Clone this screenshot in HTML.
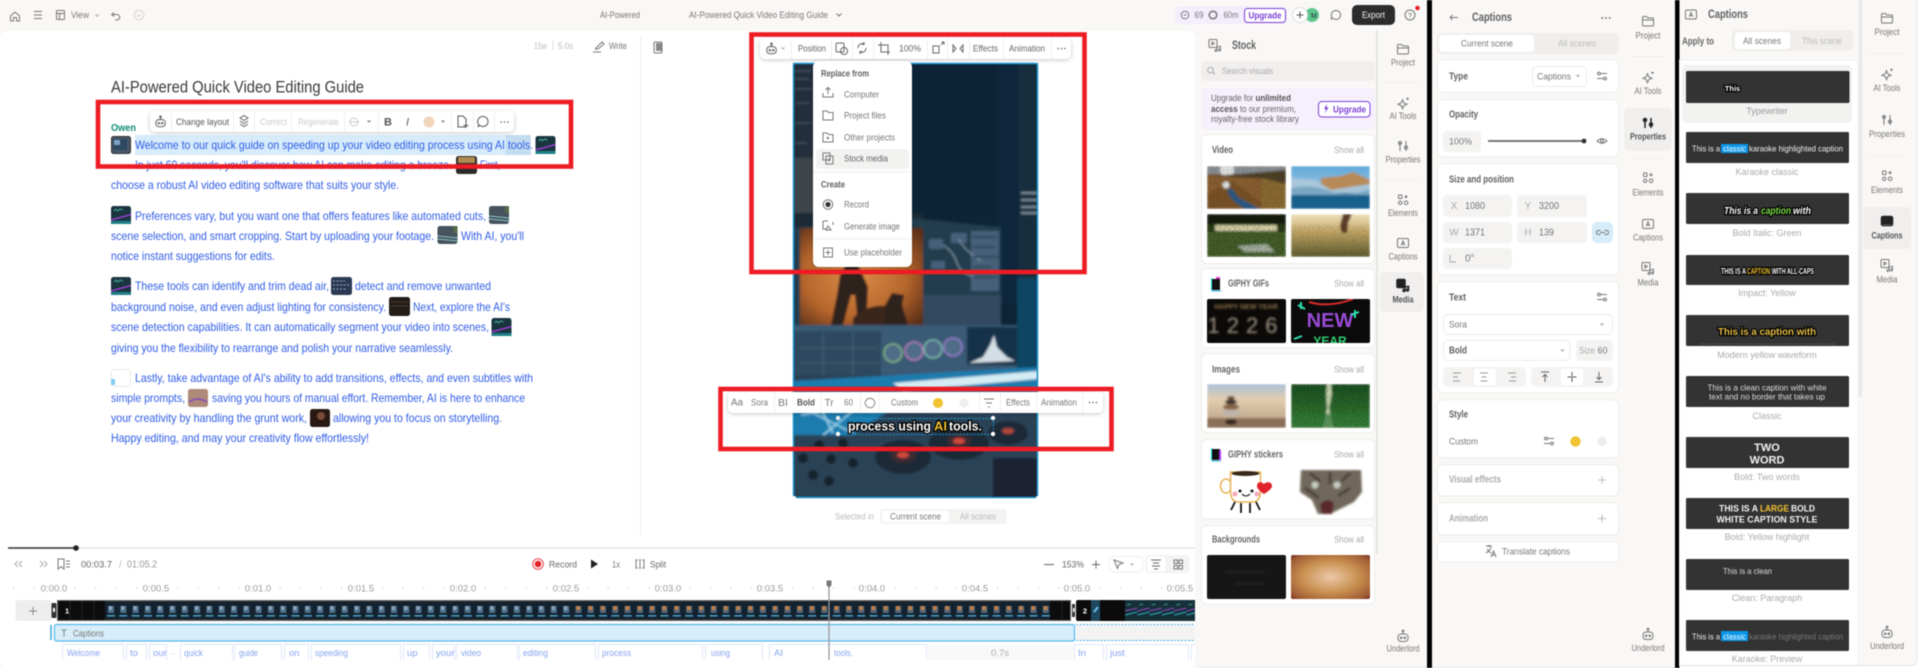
<!DOCTYPE html>
<html><head><meta charset="utf-8"><title>AI-Powered Quick Video Editing Guide</title>
<style>
html,body{margin:0;padding:0;width:1920px;height:668px;overflow:hidden;background:#fff}
svg#p{display:block;filter:blur(.5px)}
text{font-family:"Liberation Sans",sans-serif;font-size:10px;fill:#666;white-space:pre}
.m{text-anchor:middle}.e{text-anchor:end}
.b{font-weight:bold}
.s{font-size:9.5px;fill:#777}
.g{fill:#bbb}
.d{fill:#555}
.t{font-size:11.6px;fill:#2f5ce6}
.h{font-size:11.5px;font-weight:bold;fill:#606060}
.c{font-size:10px;font-weight:bold;fill:#606060}
.w{font-size:9.5px;fill:#86a3ee}
.r{font-size:9.5px;fill:#999;stroke:#fff;stroke-width:4;paint-order:stroke}
.l{font-size:9px;fill:#aaa;text-anchor:middle}
.ic{fill:none;stroke:#777;stroke-width:1}
.ia{fill:none;stroke:#222;stroke-width:1.5}
.wh{fill:#fff;stroke:#ececea;stroke-width:1}
.f{fill:#f4f3f2}
.dv{stroke:#eee;stroke-width:1}
.tb{fill:#fff;filter:url(#sh)}
.cap{fill:#fff;font-weight:bold;stroke:#000;stroke-width:2.6;paint-order:stroke}
</style></head><body>
<svg id="p" xmlns="http://www.w3.org/2000/svg" width="1920" height="668" viewBox="0 0 1920 668">
<defs>
<filter id="sh" x="-10%" y="-40%" width="120%" height="190%"><feDropShadow dx="0" dy="1" stdDeviation="2" flood-color="#000" flood-opacity=".22"/></filter>
<filter id="bl"><feGaussianBlur stdDeviation="1.2"/></filter>
<filter id="vb" x="-2%" y="-2%" width="104%" height="104%"><feGaussianBlur stdDeviation="1"/></filter>
<filter id="nz"><feTurbulence type="fractalNoise" baseFrequency=".55" numOctaves="2" seed="4"/><feColorMatrix values="0 0 0 0 0 0 0 0 0 0 0 0 0 0 0 0 0 0 2.4 -.9"/></filter>
<symbol id="fo" viewBox="0 0 16 16"><path d="M2.500 4.500a1 1 0 0 1 1-1h3L8 5h4.500a1 1 0 0 1 1 1v6a1 1 0 0 1-1 1h-9a1 1 0 0 1-1-1zM2.500 7h11"/></symbol>
<symbol id="sp" viewBox="0 0 16 16"><path d="M7.500 4.700 8.800 7.900 12 9.200 8.800 10.500 7.500 13.700 6.200 10.500 3 9.200 6.200 7.900z"/><circle cx="12.500" cy="3.800" r=".7"/></symbol>
<symbol id="sl" viewBox="0 0 16 16"><path d="M5 3v10M11 3v10"/><circle cx="5" cy="5" r="1.500"/><circle cx="11" cy="9.500" r="1.500"/></symbol>
<symbol id="el" viewBox="0 0 16 16"><rect x="3.500" y="3" width="3.500" height="3.500" rx=".6"/><path d="M11 3v3.500M9.300 4.700h3.500"/><circle cx="5.200" cy="10.800" r="1.700"/><rect x="9.300" y="9" width="3.600" height="3.600" rx="1.800"/></symbol>
<symbol id="ca" viewBox="0 0 16 16"><rect x="2.500" y="3.500" width="11" height="9" rx="1.500"/><path d="M6.300 10.300 8 6l1.700 4.300M6.900 9h2.200"/></symbol>
<symbol id="me" viewBox="0 0 16 16"><rect x="2" y="2.500" width="8" height="8" rx="1"/><path d="M5 5l2.300 1.500L5 8zM10 10l3.500-.6v3.600M10 10v3.500"/><circle cx="9" cy="13.500" r="1"/><circle cx="12.500" cy="13" r="1"/></symbol>
<symbol id="ro" viewBox="0 0 16 16"><rect x="3" y="6" width="10" height="7.500" rx="3"/><path d="M8 3.800V6"/><circle cx="8" cy="3" r=".9"/><circle cx="6.200" cy="9.800" r=".8"/><circle cx="9.800" cy="9.800" r=".8"/></symbol>
<symbol id="do" viewBox="0 0 16 16"><circle cx="3" cy="8" r="1.100" fill="#555" stroke="none"/><circle cx="8" cy="8" r="1.100" fill="#555" stroke="none"/><circle cx="13" cy="8" r="1.100" fill="#555" stroke="none"/></symbol>
<symbol id="sh2" viewBox="0 0 16 16"><path d="M6.500 5.500h6.500M3 5.500h.5M3 10.500h6.500M12.500 10.500h.5"/><circle cx="5" cy="5.500" r="1.400"/><circle cx="11" cy="10.500" r="1.400"/></symbol>
<symbol id="th1" viewBox="0 0 20 18"><rect width="20" height="18" rx="2.500" fill="#1a3540"/><path d="M3 5l2-2 2 2 2-2 3 1" stroke="#4a9" stroke-width="1" fill="none"/><path d="M0 14 20 8.500" stroke="#9a3dd0" stroke-width="1.500"/><path d="M0 15H20V18H0z" fill="#1e8088"/></symbol>
<symbol id="th2" viewBox="0 0 20 18"><rect width="20" height="18" rx="2.500" fill="#46525c"/><path d="M0 10 20 12M0 13 20 15" stroke="#8cc8cc" stroke-width="1"/><path d="M16 0h4v7h-4z" fill="#556b4a"/></symbol>
<symbol id="th3" viewBox="0 0 20 18"><rect width="20" height="18" rx="2.500" fill="#4a5868"/><rect x="2" y="3" width="14" height="11" fill="#2c4a62"/><rect x="3" y="4" width="6" height="5" fill="#7fa2c4"/><rect x=".5" y=".5" width="19" height="17" rx="2.500" fill="none" stroke="#333"/></symbol>
<pattern id="f1" x="105" y="600" width="12.300" height="21" patternUnits="userSpaceOnUse"><rect width="12.300" height="21" fill="#13222f"/><rect x="3" y="6" width="6" height="7" fill="#4f6f8a"/><rect x="4" y="6" width="3" height="4" fill="#8ea6ba"/><rect x="2" y="15" width="8" height="1.600" fill="#4a9cc0"/><rect width="12.300" height="1.600" fill="#333"/><rect y="19.400" width="12.300" height="1.600" fill="#333"/></pattern>
<pattern id="f2" x="105" y="600" width="12.300" height="21" patternUnits="userSpaceOnUse"><rect width="12.300" height="21" fill="#13222f"/><rect x="3" y="6" width="6" height="7" fill="#566878"/><rect x="4" y="6" width="3.500" height="4" fill="#c47e46"/><rect x="2" y="15" width="8" height="1.600" fill="#4a9cc0"/><rect width="12.300" height="1.600" fill="#333"/><rect y="19.400" width="12.300" height="1.600" fill="#333"/></pattern>
<pattern id="f3" x="1125" y="600" width="12.300" height="21" patternUnits="userSpaceOnUse"><rect width="12.300" height="21" fill="#16303a"/><path d="M0 11 12.300 8" stroke="#8a45b8" stroke-width="1.100"/><path d="M0 15 12.300 12" stroke="#2a9aa4" stroke-width="1.300"/><path d="M2 5l4-1" stroke="#397" stroke-width="1"/></pattern>
<radialGradient id="or" cx=".45" cy=".5" r=".7"><stop offset="0" stop-color="#dc8c48"/><stop offset=".6" stop-color="#b5662c"/><stop offset="1" stop-color="#5a2e16"/></radialGradient>
<radialGradient id="bgo" r=".72"><stop offset="0" stop-color="#ecc8aa"/><stop offset=".5" stop-color="#c8904f"/><stop offset=".85" stop-color="#a05a34"/><stop offset="1" stop-color="#6a2820"/></radialGradient>
<linearGradient id="sky" x1="0" y1="0" x2="0" y2="1"><stop offset="0" stop-color="#5fa8d8"/><stop offset="1" stop-color="#c8dce8"/></linearGradient>
<linearGradient id="fld" x1="0" y1="0" x2="0" y2="1"><stop offset="0" stop-color="#efe2c0"/><stop offset=".4" stop-color="#c4a868"/><stop offset="1" stop-color="#5e5a2c"/></linearGradient>
<linearGradient id="snd" x1="0" y1="0" x2="0" y2="1"><stop offset="0" stop-color="#a9c2d8"/><stop offset=".35" stop-color="#e3cdb0"/><stop offset="1" stop-color="#b59a80"/></linearGradient>
<linearGradient id="fr" x1="0" y1="0" x2="0" y2="1"><stop offset="0" stop-color="#1a4f22"/><stop offset="1" stop-color="#3a8034"/></linearGradient>
</defs>

<rect width="1920" height="668" fill="#fff"/>
<rect width="1427" height="668" fill="#faf8f6"/>
<rect x="0" y="31" width="1195" height="637" rx="7" fill="#fff"/>
<path d="M640.500 36V535" stroke="#eee"/>
<path d="M1377 30v524" stroke="#e6e6e6" stroke-width="2"/>

<!-- top bar -->
<path d="M10.500 16l4.500-4 4.500 4v5h-3v-3.500h-3V21h-3z" class="ic"/>
<path d="M34 11.500h8M34 15h8M34 18.500h8" class="ic"/>
<rect x="56.500" y="10.500" width="8" height="9" rx="1" class="ic"/><path d="M56.500 13.500h8M59.500 13.500v6" class="ic"/>
<text x="71" y="18" class="s" textLength="18">View</text>
<path d="M95.500 14.500l1.800 1.800 1.800-1.800" class="ic" style="stroke:#aaa"/>
<path d="M114 12.500l-2.300 2 2.300 2M112 14.500h5a2.700 2.700 0 0 1 0 5.400h-2" class="ic"/>
<circle cx="139" cy="15" r="4.800" fill="none" stroke="#d4d4d4"/><path d="M137 15l1.500 1.500 2.500-3" fill="none" stroke="#d4d4d4"/>
<text x="600" y="18" class="s" textLength="40">AI-Powered</text>
<text x="689" y="18" class="s" textLength="139">AI-Powered Quick Video Editing Guide</text>
<path d="M836.500 13.500l2.500 2.500 2.500-2.500" class="ic"/>
<rect x="1175" y="6" width="112" height="18" rx="6" fill="#f3eefb"/>
<circle cx="1185" cy="15" r="3.800" class="ic"/><path d="M1183.500 15h3" class="ic"/>
<text x="1199" y="18" class="s m" textLength="9">69</text>
<circle cx="1213" cy="15" r="3.800" fill="none" stroke="#777" stroke-width="1.500"/>
<text x="1231" y="18" class="s m" textLength="15">60m</text>
<rect x="1244.500" y="8.500" width="41" height="14" rx="3" fill="#fff" stroke="#7c3fd6"/>
<text x="1265" y="18.500" class="m b" style="font-size:9.500px;fill:#7c3fd6" textLength="33">Upgrade</text>
<circle cx="1312" cy="15" r="7" fill="#5ec58c"/><text x="1311" y="18" style="font-size:7px;fill:#234">M</text>
<circle cx="1300" cy="15" r="7.500" fill="#fff" stroke="#ddd"/><path d="M1296.500 15h7M1300 11.500v7" stroke="#555" fill="none"/>
<path d="M1336 10.500a4.500 4.500 0 1 1-3 7.800l-1.700.7.500-2a4.500 4.500 0 0 1 4.200-6.500z" class="ic"/>
<rect x="1352" y="5" width="43" height="20" rx="5" fill="#2c2c2c"/>
<text x="1373.500" y="18" class="m" style="font-size:9.500px;fill:#f4f4f4" textLength="23">Export</text>
<circle cx="1410" cy="15" r="5" class="ic"/><text x="1410" y="18" class="m" style="font-size:7.500px">?</text>
<circle cx="1417.500" cy="8" r="2.300" fill="#e8202a"/>

<!-- script panel -->
<text x="534" y="49" class="g" style="font-size:9px" textLength="13">15w</text>
<path d="M553 41v9" stroke="#ddd"/>
<text x="558" y="49" class="g" style="font-size:9px" textLength="15">5.0s</text>
<path d="M593 52h8M596 48l6-6 2 2-6 5h-2.500z" class="ic"/>
<text x="609" y="49" class="s" textLength="18">Write</text>
<rect x="654" y="42" width="8" height="11" rx="1.200" class="ic"/><rect x="656" y="43" width="5.500" height="8" fill="#888"/>

<text x="111" y="92.500" style="font-size:16.500px;fill:#3a3a3a" textLength="253">AI-Powered Quick Video Editing Guide</text>
<text x="111" y="131" style="font-size:10.500px;font-weight:bold;fill:#0f8a72" textLength="25">Owen</text>

<rect x="135" y="135" width="396" height="20" fill="#d6ecfa"/>
<rect x="506" y="135" width="24.500" height="20" fill="#c4dcf0"/>
<use href="#th3" x="111" y="136" width="20" height="18"/>
<text x="135" y="149" class="t" textLength="398">Welcome to our quick guide on speeding up your video editing process using AI tools.</text>
<use href="#th1" x="535" y="136" width="21" height="18"/>
<text x="135" y="169" class="t" textLength="317">In just 60 seconds, you'll discover how AI can make editing a breeze.</text>
<rect x="456" y="156" width="21" height="18" rx="2.500" fill="#2c2a28"/><rect x="458" y="157" width="17" height="6" fill="#b08a52"/>
<text x="480" y="169" class="t" textLength="20">First,</text>
<text x="111" y="189" class="t" textLength="288">choose a robust AI video editing software that suits your style.</text>

<use href="#th1" x="111" y="206" width="20" height="18"/>
<text x="135" y="220" class="t" textLength="351">Preferences vary, but you want one that offers features like automated cuts,</text>
<use href="#th2" x="489" y="206" width="20" height="18"/>
<text x="111" y="240" class="t" textLength="323">scene selection, and smart cropping. Start by uploading your footage.</text>
<use href="#th2" x="437" y="226" width="21" height="18"/>
<text x="461" y="240" class="t" textLength="63">With AI, you'll</text>
<text x="111" y="260" class="t" textLength="164">notice instant suggestions for edits.</text>

<use href="#th1" x="111" y="277" width="20" height="18"/>
<text x="135" y="290" class="t" textLength="194">These tools can identify and trim dead air,</text>
<rect x="331" y="277" width="21" height="18" rx="2.500" fill="#2b3a52"/><path d="M333 281h12M333 285h16M333 289h14" stroke="#8fa8c8" stroke-dasharray="2 1.500" fill="none"/>
<text x="355" y="290" class="t" textLength="136">detect and remove unwanted</text>
<text x="111" y="311" class="t" textLength="275">background noise, and even adjust lighting for consistency.</text>
<rect x="389" y="297" width="21" height="19" rx="2.500" fill="#231d1a"/><path d="M391 302h17M391 306h17" stroke="#4a3a30" fill="none"/>
<text x="413" y="311" class="t" textLength="97">Next, explore the AI's</text>
<text x="111" y="331" class="t" textLength="378">scene detection capabilities. It can automatically segment your video into scenes,</text>
<use href="#th1" x="491" y="318" width="21" height="18"/>
<text x="111" y="352" class="t" textLength="342">giving you the flexibility to rearrange and polish your narrative seamlessly.</text>

<rect x="111.500" y="369.500" width="19" height="17" rx="2.500" fill="#fff" stroke="#e8e8e8"/><rect x="111" y="379" width="4" height="6" fill="#7fd0ee"/>
<text x="135" y="382" class="t" textLength="398">Lastly, take advantage of AI's ability to add transitions, effects, and even subtitles with</text>
<text x="111" y="402" class="t" textLength="74">simple prompts,</text>
<rect x="188" y="389" width="20" height="18" rx="2.500" fill="#b08a78"/><path d="M189 402q8-6 18 0" stroke="#8a5ab0" stroke-width="2" fill="none"/>
<text x="212" y="402" class="t" textLength="313">saving you hours of manual effort. Remember, AI is here to enhance</text>
<text x="111" y="422" class="t" textLength="196">your creativity by handling the grunt work,</text>
<rect x="310" y="409" width="20" height="18" rx="2.500" fill="#2a1812"/><circle cx="321" cy="416" r="4" fill="#7a4a38"/>
<text x="333" y="422" class="t" textLength="169">allowing you to focus on storytelling.</text>
<text x="111" y="442" class="t" textLength="258">Happy editing, and may your creativity flow effortlessly!</text>

<!-- script toolbar -->
<rect x="150" y="111" width="364" height="21" rx="5" class="tb"/>
<use href="#ro" x="153" y="114" width="15" height="15" class="ic" style="stroke:#555"/>
<path d="M171.500 111v21M233.500 111v21M254.500 111v21M291.500 111v21M344.500 111v21M378.500 111v21M451.500 111v21M473.500 111v21M494.500 111v21" class="dv"/>
<text x="176" y="125" class="d" style="font-size:9.500px" textLength="53">Change layout</text>
<path d="M240 118l4-2.500 4 2.500-4 2.500zM240 121l4 2.500 4-2.500M240 124l4 2.500 4-2.500" class="ic" style="stroke:#666"/>
<text x="260" y="125" class="g" style="font-size:9.500px;fill:#ccc" textLength="27">Correct</text>
<text x="298" y="125" class="g" style="font-size:9.500px;fill:#ccc" textLength="41">Regenerate</text>
<circle cx="354" cy="122" r="4" fill="none" stroke="#ccc"/><path d="M349 122h10" stroke="#ccc"/>
<path d="M367.500 120.500l1.500 1.500 1.500-1.500" class="ic"/>
<text x="388" y="125.500" class="m b" style="font-size:11px;fill:#555">B</text>
<text x="407.500" y="125.500" class="m" style="font-size:11px;font-style:italic;fill:#555">I</text>
<circle cx="429" cy="122" r="5.500" fill="#f1d6bd"/>
<path d="M441.500 120.500l1.500 1.500 1.500-1.500" class="ic"/>
<path d="M458 116h5l3 3v8h-8zM466 123v5M463.500 125.500h5" class="ic" style="stroke:#555"/>
<path d="M483 116.500a5 5 0 1 1-3 9l-1.800 1 .5-2a5 5 0 0 1 4.300-8z" class="ic" style="stroke:#555"/>
<use href="#do" x="499" y="116.500" width="11" height="11"/>

<!-- canvas video -->
<svg x="793" y="63" width="245" height="435" viewBox="0 0 245 435">
<rect width="245" height="435" fill="#0d2436"/>
<g filter="url(#vb)">
<rect width="22" height="150" fill="#222f3a"/>
<path d="M2 8h16M2 16h14M2 26h17M3 40h14M2 60h16M2 80h12M2 96h15M2 115h14" stroke="#4a5a66" fill="none"/>
<rect x="205" width="40" height="240" fill="#10263a"/>
<rect x="225" width="20" height="215" fill="#182e3e"/>
<path d="M228 130h17M228 137h17M228 144h17M228 150h17" stroke="#80939f" stroke-width="2" fill="none"/>
<rect y="95" width="22" height="55" fill="#3c454b"/>
<rect y="150" width="130" height="15" fill="#1c2a36"/>
<path d="M119 155 208 164V310H0V165z" fill="#243c4e"/>
<rect x="7" y="165" width="123" height="97" fill="url(#or)"/>
<path d="M38 262l6-30 3-20 8-14 6-2 6 10 8 18-2 38h-8l-3-30-4 0-8 30zM86 262l5-18 8-14 12 2-2 10 6 20z" fill="#2e201a"/>
<path d="M60 255q14-14 34-12l-4 19H60z" fill="#3a261c"/>
<path d="M136 176h14v10h-14zM158 170h16v10h-16zM138 198h14v8h-14zM178 168h28v60h-28z" fill="#46607a"/>
<path d="M150 182q10 6 14 18t20 14M166 176q4 10 22 22" stroke="#8ca4b4" fill="none"/>
<path d="M180 174h24M180 184h22M180 194h26M180 204h18M180 214h24" stroke="#2b4456" stroke-width="2"/>
<rect x="130" y="232" width="78" height="30" fill="#324a5e"/>
<rect y="262" width="245" height="55" fill="#3a5a74"/>
<rect y="268" width="88" height="45" fill="#2f4a5e"/>
<path d="M5 300h80M30 270v45M60 270v45M5 285h80" stroke="#54758c" fill="none" stroke-width=".6"/>
<circle cx="100" cy="290" r="9" fill="#4f6c88" stroke="#8ac080" stroke-width="1.300"/>
<circle cx="121" cy="288" r="9" fill="#4f6c88" stroke="#c080c8" stroke-width="1.300"/>
<circle cx="140" cy="286" r="9" fill="#4f6c88" stroke="#80c8b0" stroke-width="1.300"/>
<circle cx="160" cy="284" r="9" fill="#4f6c88" stroke="#a080d8" stroke-width="1.300"/>
<rect x="174" y="264" width="50" height="38" fill="#14304a"/>
<path d="M176 300l14-6 7-12 4-10 3 12 10 10 8 4z" fill="#d4dee6"/>
<rect x="224" y="215" width="21" height="95" fill="#0f4464"/>
<rect y="312" width="245" height="123" fill="#2c4256"/>
<path d="M0 318 245 304V330L0 352z" fill="#1a7cae"/>
<path d="M100 320 245 308V316L110 328z" fill="#d4ecf4"/>
<path d="M0 345 75 330 100 345 60 372 0 372z" fill="#1e7cae"/>
<path d="M0 340 60 370M20 330 40 370M70 340 30 372M8 352 50 345" stroke="#9cd8f0" stroke-width="1.500" fill="none"/>
<ellipse cx="110" cy="394" rx="28" ry="17" fill="#1c2a38"/><ellipse cx="110" cy="392" rx="13" ry="8" fill="#3c2a30"/><ellipse cx="110" cy="392" rx="6" ry="3" fill="#d0483a"/>
<ellipse cx="166" cy="380" rx="30" ry="17" fill="#1c2a38"/><ellipse cx="166" cy="378" rx="12" ry="7" fill="#3c2a30"/><ellipse cx="166" cy="378" rx="6" ry="3" fill="#d0483a"/>
<ellipse cx="215" cy="370" rx="20" ry="12" fill="#1c2a38"/><ellipse cx="215" cy="368" rx="6" ry="3" fill="#b04a3a"/>
<g fill="#14202c"><circle cx="10" cy="395" r="5"/><circle cx="26" cy="382" r="5"/><circle cx="38" cy="396" r="5"/><circle cx="20" cy="412" r="5"/><circle cx="50" cy="380" r="5"/><circle cx="60" cy="400" r="5"/><circle cx="36" cy="418" r="5"/></g>
<rect x="200" y="395" width="45" height="40" fill="#1a2430"/>
</g>
</svg>
<rect x="793.500" y="63.500" width="244" height="434" rx="2" fill="none" stroke="#1b96d2" stroke-width="1.500"/>
<circle cx="794" cy="498" r="2" fill="#fff"/><circle cx="1038" cy="498" r="2" fill="#fff"/>

<!-- canvas toolbar -->
<rect x="760" y="38" width="311" height="21" rx="5" class="tb"/>
<use href="#ro" x="764" y="41" width="15" height="15" class="ic" style="stroke:#555"/>
<path d="M781.500 47.500l1.500 1.500 1.500-1.500" class="ic" style="stroke:#aaa"/>
<path d="M791.500 38v21M831.500 38v21M852.500 38v21M873.500 38v21M927.500 38v21M947.500 38v21M969.500 38v21M1003.500 38v21M1051.500 38v21" class="dv"/>
<text x="798" y="51.500" class="s" style="fill:#666" textLength="28">Position</text>
<rect x="836" y="43" width="8" height="9" rx="1.500" class="ic" style="stroke:#666"/><circle cx="844" cy="51" r="3.500" fill="#fff" class="ic" style="stroke:#666"/>
<path d="M858 48a4.500 4.500 0 0 1 6-4.200M866 48a4.500 4.500 0 0 1-6 4.200M864 42v2.500h-2M860 54v-2.500h2" class="ic" style="stroke:#666"/>
<path d="M881 42v10h9M878 45h10v10" class="ic" style="stroke:#666"/>
<text x="899" y="51.500" class="s" style="fill:#666" textLength="22">100%</text>
<rect x="933" y="46" width="6" height="7" class="ic" style="stroke:#666"/><path d="M941 45l3-3M941.500 42h2.500v2.500" class="ic" style="stroke:#666"/>
<path d="M953 45v7l3-3.500zM963 45v7l-3-3.500z" class="ic" style="stroke:#666"/>
<text x="973" y="51.500" class="s" style="fill:#666" textLength="25">Effects</text>
<text x="1009" y="51.500" class="s" style="fill:#666" textLength="36">Animation</text>
<use href="#do" x="1056" y="43" width="11" height="11"/>

<!-- replace menu -->
<rect x="813" y="61" width="99" height="206" rx="6" class="tb"/>
<rect x="816" y="149" width="93" height="20" rx="3" fill="#f2f2f1"/>
<text x="821" y="76.500" class="c" style="font-size:9.500px" textLength="48">Replace from</text>
<path d="M823 93v4h10v-4M828 94v-6M825.500 90l2.500-2.500 2.500 2.500" class="ic"/>
<text x="844" y="97.500" class="s" textLength="35">Computer</text>
<path d="M823 111h4l1.500 1.500h4.500v7.500H823z" class="ic"/>
<text x="844" y="118.500" class="s" textLength="42">Project files</text>
<path d="M823 133h4l1.500 1.500h4.500v7.500H823z" class="ic"/><path d="M827 136.500l2.500 1.500-2.500 1.500z" fill="#666"/>
<text x="844" y="140.500" class="s" textLength="51">Other projects</text>
<rect x="823" y="153" width="7" height="7" class="ic"/><rect x="826" y="156" width="7" height="8" fill="#f2f2f1" class="ic"/><path d="M828.500 158.500l2 1.500-2 1.500z" fill="#666"/>
<text x="844" y="161.500" class="s" style="fill:#666" textLength="44">Stock media</text>
<path d="M813 172h99M813 239h99" class="dv"/>
<text x="821" y="187.500" class="c" style="font-size:9.500px" textLength="24">Create</text>
<circle cx="828" cy="204.500" r="4.800" class="ic"/><circle cx="828" cy="204.500" r="2.600" fill="#333"/>
<text x="844" y="207.500" class="s" textLength="25">Record</text>
<path d="M823 221h5M823 221v8h4M833 225v-3M826 230l2-4 3 4z" class="ic"/>
<text x="844" y="229.500" class="s" textLength="56">Generate image</text>
<rect x="823.500" y="248" width="9" height="9" class="ic"/><path d="M828 250v5M825.500 252.500h5" class="ic"/>
<text x="844" y="255.500" class="s" textLength="58">Use placeholder</text>

<!-- caption overlay -->
<rect x="838.500" y="418.500" width="155" height="16" fill="none" stroke="#1b96d2" stroke-dasharray="2 1.500"/>
<text x="848" y="430.500" class="cap" style="font-size:12.500px" textLength="83">process using</text>
<text x="934" y="430.500" class="cap" style="font-size:12.500px;fill:#f1c232" textLength="13">AI</text>
<text x="949" y="430.500" class="cap" style="font-size:12.500px" textLength="33">tools.</text>
<circle cx="838" cy="434" r="2.200" fill="#fff"/><circle cx="993" cy="434" r="2.200" fill="#fff"/><circle cx="993" cy="418" r="2.200" fill="#fff"/><circle cx="838" cy="418" r="2.200" fill="#eee"/>

<rect x="728" y="392" width="375" height="21" rx="5" class="tb"/>
<path d="M774.500 392v21M821.500 392v21M860.500 392v21M879.500 392v21M979.500 392v21M1000.500 392v21M1036.500 392v21M1082.500 392v21" class="dv"/>
<text x="737" y="405.500" class="m s" style="font-size:10px">Aa</text>
<text x="751" y="405.500" class="s" textLength="17">Sora</text>
<text x="783" y="406" class="m s" style="font-size:10px" textLength="10">BI</text>
<text x="797" y="405.500" class="b d" style="font-size:9.500px" textLength="18">Bold</text>
<text x="829" y="406" class="m s" style="font-size:10px">Tr</text>
<text x="844" y="405.500" class="s" textLength="9">60</text>
<circle cx="870" cy="403" r="4.800" fill="#fff" stroke="#888"/>
<text x="891" y="405.500" class="s" textLength="27">Custom</text>
<circle cx="938" cy="403" r="5" fill="#f1c232"/>
<circle cx="964" cy="403" r="4.500" fill="#eee"/>
<path d="M984 399h10M986 403h6M988 407h2" class="ic"/>
<text x="1006" y="405.500" class="s" textLength="24">Effects</text>
<text x="1041" y="405.500" class="s" textLength="36">Animation</text>
<use href="#do" x="1087.500" y="397" width="11" height="11"/>

<text x="835" y="519.500" class="g" style="font-size:9.500px" textLength="39">Selected in</text>
<rect x="880" y="509" width="127" height="15" rx="3" fill="#f3f3f2"/>
<rect x="882" y="511" width="67" height="11" rx="2.500" fill="#fff"/>
<text x="890" y="519.500" class="s" textLength="51">Current scene</text>
<text x="960" y="519.500" class="g" style="font-size:9.500px" textLength="36">All scenes</text>

<!-- red boxes -->
<g fill="none" stroke="#ed1c24" stroke-width="4.600">
<rect x="98" y="102" width="473" height="64.500"/>
<rect x="751.500" y="34.500" width="333" height="237.500"/>
<rect x="720.500" y="389" width="391" height="60"/>
</g>

<!-- timeline -->
<path d="M8 548H1195" stroke="#e6e6e6" stroke-width="1.500"/>
<path d="M8 548H76" stroke="#333" stroke-width="1.500"/><circle cx="76" cy="548" r="2.800" fill="#222"/>
<path d="M22 561l-3 3 3 3M18 561l-3 3 3 3M40 561l3 3-3 3M44 561l3 3-3 3" class="ic" style="stroke:#aaa"/>
<path d="M58 559h6v10l-3-2.500-3 2.500zM66 561h4M66 564h4M66 567h4" class="ic"/>
<text x="81" y="567.500" class="s" style="fill:#666" textLength="31">00:03.7</text>
<text x="119" y="567.500" class="g">/</text>
<text x="127" y="567.500" class="g" style="fill:#999" textLength="30">01:05.2</text>
<circle cx="538" cy="564" r="5.300" fill="#fff" stroke="#e8474c"/><circle cx="538" cy="564" r="3.300" fill="#e8202a"/>
<text x="549" y="567.500" class="s" style="fill:#666" textLength="28">Record</text>
<path d="M591 559.500v9l7-4.500z" fill="#222"/>
<text x="612" y="567.500" class="s" textLength="8">1x</text>
<path d="M640 559v10M638 560h-2v8h2M642 560h2v8h-2" class="ic"/>
<text x="650" y="567.500" class="s" style="fill:#666" textLength="16">Split</text>
<path d="M1044 564.500h10" stroke="#666"/>
<text x="1062" y="567.500" class="s" style="fill:#666" textLength="22">153%</text>
<path d="M1092 564.500h8M1096 560.500v8" stroke="#666"/>
<rect x="1109.500" y="556.500" width="33" height="15.500" rx="4" fill="#fff" stroke="#eee"/>
<path d="M1114 560l9 3-4 1.500-1.500 4z" class="ic"/><path d="M1130.500 563.500l1.500 1.500 1.500-1.500" class="ic" style="stroke:#aaa"/>
<rect x="1145" y="555" width="44" height="18" rx="3" fill="#f3f3f2"/><rect x="1147.500" y="556.500" width="18" height="15" rx="3" fill="#fff"/>
<path d="M1151 560h10M1153 563h6M1152 566h8M1154 569h4" class="ic" style="stroke:#666"/>
<rect x="1174" y="560" width="3.500" height="3.500" class="ic"/><rect x="1179" y="560" width="3.500" height="3.500" class="ic"/><rect x="1174" y="565.500" width="3.500" height="3.500" class="ic"/><rect x="1179" y="565.500" width="3.500" height="3.500" class="ic"/>

<path d="M13 588H1195" stroke="#c8c8c8" stroke-width="1.200" stroke-dasharray="1.200 19.300"/>
<text x="54" y="591.500" class="r m">0:00.0</text><text x="156" y="591.500" class="r m">0:00.5</text><text x="258" y="591.500" class="r m">0:01.0</text><text x="361" y="591.500" class="r m">0:01.5</text><text x="463" y="591.500" class="r m">0:02.0</text><text x="566" y="591.500" class="r m">0:02.5</text><text x="668" y="591.500" class="r m">0:03.0</text><text x="770" y="591.500" class="r m">0:03.5</text><text x="872" y="591.500" class="r m">0:04.0</text><text x="975" y="591.500" class="r m">0:04.5</text><text x="1077" y="591.500" class="r m">0:05.0</text><text x="1180" y="591.500" class="r m">0:05.5</text>

<rect x="15.500" y="600" width="36" height="21" rx="3" fill="#eee"/><path d="M29 611h8M33 607v8" stroke="#888" fill="none"/>
<rect x="51.500" y="603" width="5" height="15" rx="1" fill="#333"/><rect x="53" y="608" width="2" height="4" fill="#fff"/>
<rect x="57" y="600" width="1014" height="21" fill="#0c0c0c"/>
<rect x="105" y="601" width="465" height="19" fill="url(#f1)"/>
<rect x="570" y="601" width="480" height="19" fill="url(#f2)"/>
<rect x="57.500" y="600.500" width="1013" height="20" fill="none" stroke="#666"/>
<path d="M70 601v19M82 601v19M94 601v19M1062 601v19" stroke="#222"/>
<text x="65" y="613.500" style="font-size:7.500px;fill:#fff;font-weight:bold">1</text>
<rect x="1072" y="604" width="3" height="13" fill="#333"/><rect x="1073" y="608" width="1.500" height="4" fill="#fff"/>
<rect x="1076" y="600" width="119" height="21" rx="2" fill="#0b0b0b"/>
<text x="1085" y="613.500" style="font-size:7.500px;fill:#fff;font-weight:bold" class="m">2</text>
<rect x="1091" y="600" width="9" height="21" fill="#1e4860"/><path d="M1094 612l4-5" stroke="#6fc0e8" stroke-width="2"/>
<rect x="1125" y="600" width="70" height="21" fill="url(#f3)"/>

<path d="M51 625v15" stroke="#3aa6de" stroke-width="1.500"/>
<rect x="54.500" y="624.500" width="1020" height="16.500" rx="2" fill="#d7edfa" stroke="#55b8ea" stroke-width="1.200"/>
<rect x="1076" y="625" width="119" height="16" fill="#f3f3f3"/>
<path d="M1076 624.500h119M1076 640.500h119" stroke="#49aee8" stroke-dasharray="2 1.500"/>
<text x="64" y="636.500" class="s m" style="font-size:10px">T</text>
<text x="73" y="636.500" class="s" textLength="31">Captions</text>

<g fill="#fff" stroke="#dfe8fb">
<path d="M62.500 660v-15.500h61V660M126.500 660v-15.500h20V660M149.500 660v-15.500h17V660M180.500 660v-15.500h52V660M234.500 660v-15.500h47V660M284.500 660v-15.500h24V660M311.500 660v-15.500h89V660M403.500 660v-15.500h26V660M432.500 660v-15.500h22V660M456.500 660v-15.500h61V660M519.500 660v-15.500h76V660M598.500 660v-15.500h104V660M705.500 660v-15.500h57V660M769.500 660v-15.500h157V660M1074.500 660v-15.500h29V660M1106.500 660v-15.500h82V660M1191.500 660v-15.500h4"/>
</g>
<rect x="928" y="645" width="145" height="15" fill="#f8f8f8"/>
<text x="67" y="656" class="w" textLength="33">Welcome</text><text x="130" y="656" class="w">to</text><text x="153" y="656" class="w">our</text><text x="170" y="654" class="g" style="font-size:7px">...</text><text x="184" y="656" class="w" textLength="19">quick</text><text x="239" y="656" class="w" textLength="19">guide</text><text x="289" y="656" class="w">on</text><text x="315" y="656" class="w" textLength="33">speeding</text><text x="407" y="656" class="w">up</text><text x="436" y="656" class="w">your</text><text x="461" y="656" class="w" textLength="20">video</text><text x="523" y="656" class="w" textLength="25">editing</text><text x="602" y="656" class="w" textLength="29">process</text><text x="711" y="656" class="w" textLength="19">using</text><text x="774" y="656" class="w">AI</text><text x="834" y="656" class="w" textLength="19">tools.</text><text x="1000" y="656" class="l" style="font-size:9.500px">0.7s</text><text x="1078" y="656" class="w">In</text><text x="1110" y="656" class="w">just</text>
<path d="M829 585V660" stroke="#999" stroke-width="1.300"/><path d="M827 581h4v4l-2 2-2-2z" fill="#777" stroke="#777"/>

<!-- stock panel -->
<use href="#me" x="1207" y="37" width="16" height="16" class="ic"/>
<text x="1232" y="49" class="h" textLength="24">Stock</text>
<rect x="1201" y="61" width="174" height="20" rx="5" fill="#f1efee"/>
<circle cx="1210.500" cy="70" r="2.800" class="ic" style="stroke:#aaa"/><path d="M1212.500 72l2.500 2.500" class="ic" style="stroke:#aaa"/>
<text x="1222" y="74" class="g" style="font-size:9.500px;fill:#aaa" textLength="51">Search visuals</text>
<rect x="1201" y="88" width="174" height="42" rx="5" fill="#f5f0fc"/>
<text x="1211" y="101" class="s" style="fill:#666" textLength="80">Upgrade for <tspan font-weight="bold" fill="#555">unlimited</tspan></text>
<text x="1211" y="112" class="s" style="fill:#666" textLength="85"><tspan font-weight="bold" fill="#555">access</tspan> to our premium,</text>
<text x="1211" y="122" class="s" style="fill:#666" textLength="88">royalty-free stock library</text>
<rect x="1318.500" y="101.500" width="51.500" height="15.500" rx="3.500" fill="#fff" stroke="#7c3fd6"/>
<path d="M1327 104l-3 5h2l-1 4 3.500-5.500h-2z" fill="#7c3fd6"/>
<text x="1333" y="112.500" class="b" style="font-size:9.500px;fill:#7c3fd6" textLength="33">Upgrade</text>

<rect x="1201.500" y="134.500" width="173" height="129" rx="5" class="wh"/>
<text x="1212" y="153" class="c" textLength="21">Video</text>
<text x="1334" y="153" class="g" style="font-size:9.500px;fill:#aaa" textLength="30">Show all</text>
<svg x="1207" y="166" width="79" height="43" viewBox="0 0 79 43"><g filter="url(#vb)"><rect width="79" height="43" fill="#8a5f30"/><rect width="79" height="8" fill="#8a9094"/><circle cx="20" cy="4" r="7" fill="#e4e6e6"/><path d="M0 10 35 8 79 4V20L50 12z" fill="#4e4028"/><path d="M0 28 25 15 60 40 30 43H0z" fill="#7a5228"/><path d="M22 22c8 3 5 8 14 12s12 7 18 9H38c-6-4-10-6-14-11s-4-7-2-10z" fill="#2a5a84"/><circle cx="19" cy="19" r="3.500" fill="#e4e8e8"/><path d="M55 12 79 18V43H55z" fill="#8a6a30"/></g><rect width="79" height="43" filter="url(#nz)" opacity=".15"/></svg>
<svg x="1291" y="166" width="79" height="43" viewBox="0 0 79 43"><g filter="url(#vb)"><rect width="79" height="43" fill="url(#sky)"/><path d="M30 12 50 10 62 6 79 14V26H30z" fill="#b88a58"/><path d="M0 12 24 14 40 24 79 18V30H0z" fill="#a8c6da"/><rect y="27" width="79" height="16" fill="#17608c"/><path d="M0 22q20-4 38 3t41-2v6H0z" fill="#7aa8c4"/></g></svg>
<svg x="1207" y="214" width="79" height="43" viewBox="0 0 79 43"><g filter="url(#vb)"><rect width="79" height="43" fill="#2c3a16"/><rect width="79" height="10" fill="#181e0e"/><rect x="8" y="11" width="62" height="6" fill="#d8d4a8"/><rect y="18" width="79" height="25" fill="#45602a"/><path d="M30 32l30-2 8 8-30 0z" fill="#a4b2a0"/></g><rect width="79" height="43" filter="url(#nz)" opacity=".25"/></svg>
<svg x="1291" y="214" width="79" height="43" viewBox="0 0 79 43"><g filter="url(#vb)"><rect width="79" height="43" fill="url(#fld)"/><path d="M52 0h9l-4 9-1 10-5 0-2-7z" fill="#5a3a28"/></g><rect y="14" width="79" height="29" filter="url(#nz)" opacity=".12"/></svg>

<rect x="1201.500" y="268.500" width="173" height="79.500" rx="5" class="wh"/>
<rect x="1212" y="279" width="8" height="11" fill="#111"/><path d="M1211.500 278v13" stroke="#1ed"/><path d="M1212 291h9" stroke="#2ae"/><path d="M1216 278h4" stroke="#d3c" stroke-width="2"/>
<text x="1228" y="286.500" class="c" style="fill:#666" textLength="41">GIPHY GIFs</text>
<text x="1334" y="286.500" class="g" style="font-size:9.500px;fill:#aaa" textLength="30">Show all</text>
<svg x="1207" y="299" width="79" height="44" viewBox="0 0 79 44"><rect width="79" height="44" rx="2" fill="#0c0a08"/><g filter="url(#vb)"><text x="39" y="10" class="m" style="font-size:7px;fill:#8a7248;font-weight:bold">HAPPY NEW YEAR</text><text x="39" y="34" class="m" style="font-size:22px;fill:#a09484;letter-spacing:7px">1226</text></g></svg>
<svg x="1291" y="299" width="79" height="44" viewBox="0 0 79 44"><rect width="79" height="44" rx="2" fill="#0b0b0b"/><path d="M18 3q20 6 44-3" stroke="#d82a2a" fill="none" stroke-width="2"/><text x="39" y="28" class="m" style="font-size:20px;fill:#9a4ad4;font-weight:bold">NEW</text><path d="M60 16l8-3M64 11v8M7 6l7 4M10 3v7M3 40l8-3" stroke="#2fe0b0" stroke-width="2"/><text x="39" y="46" class="m" style="font-size:12px;fill:#2fd070;font-weight:bold">YEAR</text></svg>

<rect x="1201.500" y="353.500" width="173" height="79.500" rx="5" class="wh"/>
<text x="1212" y="372.500" class="c" style="fill:#666" textLength="28">Images</text>
<text x="1334" y="372.500" class="g" style="font-size:9.500px;fill:#aaa" textLength="30">Show all</text>
<svg x="1207" y="384" width="79" height="44" viewBox="0 0 79 44"><g filter="url(#vb)"><rect width="79" height="44" fill="url(#snd)"/><ellipse cx="24" cy="14" rx="4" ry="2" fill="#6a5040"/><ellipse cx="24" cy="18" rx="6" ry="2.500" fill="#3c302a"/><ellipse cx="24" cy="23" rx="8" ry="3" fill="#856046"/><ellipse cx="24" cy="29" rx="10" ry="3.500" fill="#c0b4a8"/><rect y="34" width="79" height="10" fill="#8a6f58"/><ellipse cx="24" cy="38" rx="6" ry="3" fill="#3a2a20"/></g></svg>
<svg x="1291" y="384" width="79" height="44" viewBox="0 0 79 44"><g filter="url(#vb)"><rect width="79" height="44" fill="url(#fr)"/><path d="M36 0h4l1 10-3 14 5 20h-11l4-20-1-14z" fill="#c8d8b0"/><path d="M0 30h79v14H0z" fill="#2f7a38" opacity=".7"/></g><rect width="79" height="44" filter="url(#nz)" opacity=".2"/></svg>

<rect x="1201.500" y="439.500" width="173" height="79.500" rx="5" class="wh"/>
<rect x="1212" y="449" width="8" height="11" fill="#111"/><path d="M1211.500 448v13" stroke="#1ed"/><path d="M1212 461h9" stroke="#2ae"/><path d="M1220 450v10" stroke="#a3e" stroke-width="2"/>
<text x="1228" y="457.500" class="c" style="fill:#666" textLength="55">GIPHY stickers</text>
<text x="1334" y="457.500" class="g" style="font-size:9.500px;fill:#aaa" textLength="30">Show all</text>
<g><ellipse cx="1226" cy="486" rx="5.500" ry="7" fill="none" stroke="#e9b355" stroke-width="1.500"/><path d="M1230.500 472h30v18q0 12-8 12h-14q-8 0-8-12z" fill="#fff" stroke="#e9b355" stroke-width="1.500"/><ellipse cx="1245.500" cy="473.500" rx="14" ry="2.500" fill="#3a2a1c"/><circle cx="1240" cy="491" r="1.500" fill="#111"/><circle cx="1252" cy="491" r="1.500" fill="#111"/><path d="M1242 494q4 4 8 0" stroke="#111" fill="none"/><circle cx="1235" cy="494" r="2.500" fill="#f4a8b8"/><circle cx="1257" cy="494" r="2.500" fill="#f4a8b8"/><path d="M1264 484c-3-3-7-2-7 2 0 3 4 6 7 8 3-2 8-5 8-8 0-4-5-5-8-2z" fill="#e0222a"/><path d="M1235 502l-4 8M1241 503v10M1250 503v10M1256 502l4 8" stroke="#111" stroke-width="1.800"/></g>
<g filter="url(#vb)"><path d="M1301 470h60l1 22-8 10-24 12h-12l-6-14-12-8z" fill="#6f675a"/><path d="M1310 473l10 8M1350 473l-8 8M1305 488l14 10M1350 488l-12 8M1330 472v12" stroke="#443c30" stroke-width="2.500"/><circle cx="1315" cy="485" r="3.500" fill="#c4ccc0"/><circle cx="1337" cy="485" r="3.500" fill="#c4ccc0"/><path d="M1320 505q6-9 14-2l-2 11h-10z" fill="#5a2c2c"/></g>

<rect x="1201.500" y="525.500" width="173" height="79" rx="5" class="wh"/>
<text x="1212" y="542.500" class="c" style="fill:#666" textLength="48">Backgrounds</text>
<text x="1334" y="542.500" class="g" style="font-size:9.500px;fill:#aaa" textLength="30">Show all</text>
<rect x="1207" y="555" width="79" height="44" rx="2" fill="#161616"/><path d="M1225 572h40M1235 584h30" stroke="#242424" stroke-width="3" filter="url(#bl)"/>
<rect x="1291" y="555" width="79" height="44" rx="2" fill="url(#bgo)"/>

<!-- sidebar 1 -->
<use href="#fo" x="1395" y="41" width="16" height="16" class="ic"/><text x="1403" y="65.500" class="m s" textLength="24">Project</text>
<path d="M1386 82.500h33" class="dv"/>
<use href="#sp" x="1395" y="95" width="16" height="16" class="ic"/><text x="1403" y="119" class="m s" textLength="27">AI Tools</text>
<use href="#sl" x="1395" y="138" width="16" height="16" class="ic"/><text x="1403" y="162.500" class="m s" textLength="35">Properties</text>
<path d="M1386 179.500h33" class="dv"/>
<use href="#el" x="1395" y="192" width="16" height="16" class="ic"/><text x="1403" y="216" class="m s" textLength="30">Elements</text>
<use href="#ca" x="1395" y="235" width="16" height="16" class="ic"/><text x="1403" y="259.500" class="m s" textLength="29">Captions</text>
<rect x="1380" y="272" width="44" height="40" rx="5" fill="#f0efee"/>
<use href="#me" x="1395" y="277" width="16" height="16" class="ia"/><rect x="1397" y="279.500" width="8" height="8" fill="#222"/>
<text x="1403" y="302.500" class="m b" style="font-size:9.500px;fill:#555" textLength="21">Media</text>
<use href="#ro" x="1395" y="628" width="16" height="16" class="ic"/><text x="1403" y="651.500" class="m s" textLength="33">Underlord</text>
<path d="M1200 667.500h227" stroke="#e6e6e6"/>

<!-- black separators -->
<rect x="1427" y="0" width="5" height="668" fill="#000"/>
<rect x="1675" y="0" width="4.500" height="668" fill="#000"/>

<!-- panel 2 -->
<rect x="1432" y="0" width="243" height="668" fill="#faf8f6"/>
<path d="M1450 17.500h8M1450 17.500l2.500-2.500M1450 17.500l2.500 2.500" class="ic"/>
<text x="1472" y="21" class="h" textLength="40">Captions</text>
<use href="#do" x="1600" y="12" width="12" height="12"/>
<rect x="1437" y="33" width="182" height="21" rx="5" fill="#f0eeec"/><rect x="1439" y="35" width="95" height="17" rx="3.500" fill="#fff"/>
<text x="1461" y="46.500" class="s" textLength="52">Current scene</text>
<text x="1558" y="46.500" class="g" style="font-size:9.500px" textLength="38">All scenes</text>

<rect x="1437.500" y="59.500" width="181" height="33" rx="5" class="wh"/>
<text x="1449" y="79.500" class="c" textLength="19">Type</text>
<rect x="1532.500" y="66.500" width="54" height="20" rx="4" fill="#fff" stroke="#ececea"/>
<text x="1537" y="79.500" class="s" textLength="34">Captions</text>
<path d="M1576.500 75l1.500 1.500 1.500-1.500" class="ic" style="stroke:#999"/>
<use href="#sh2" x="1594" y="68" width="16" height="16" class="ic"/>

<rect x="1437.500" y="99.500" width="181" height="57.500" rx="5" class="wh"/>
<text x="1449" y="117.500" class="c" textLength="29">Opacity</text>
<rect x="1443" y="131" width="38" height="21" rx="4" class="f"/>
<text x="1449" y="144.500" class="s" textLength="23">100%</text>
<path d="M1488 141h96" stroke="#666" stroke-width="1.800"/><circle cx="1584" cy="141" r="2.400" fill="#333"/>
<path d="M1597 141q5-4.500 10 0q-5 4.500-10 0z" class="ic"/><circle cx="1602" cy="141" r="1.500" class="ic"/>

<rect x="1437.500" y="163.500" width="181" height="111.500" rx="5" class="wh"/>
<text x="1449" y="182.500" class="c" textLength="65">Size and position</text>
<rect x="1443" y="195" width="69" height="22" rx="4" class="f"/><rect x="1517" y="195" width="70" height="22" rx="4" class="f"/>
<rect x="1443" y="222" width="69" height="21" rx="4" class="f"/><rect x="1517" y="222" width="70" height="21" rx="4" class="f"/>
<rect x="1443" y="248" width="69" height="21" rx="4" class="f"/>
<text x="1454" y="209" class="m g" style="fill:#aaa">X</text><text x="1465" y="209" style="fill:#777" textLength="20">1080</text>
<text x="1528" y="209" class="m g" style="fill:#aaa">Y</text><text x="1539" y="209" style="fill:#777" textLength="20">3200</text>
<text x="1454" y="235.500" class="m g" style="fill:#aaa">W</text><text x="1465" y="235.500" style="fill:#777" textLength="20">1371</text>
<text x="1528" y="235.500" class="m g" style="fill:#aaa">H</text><text x="1539" y="235.500" style="fill:#777" textLength="15">139</text>
<path d="M1450 255v7h6" fill="none" stroke="#aaa"/><text x="1465" y="261.500" style="fill:#777">0°</text>
<rect x="1592" y="222" width="21" height="21" rx="5" fill="#d6ecfa"/>
<path d="M1600.500 230.500h-2a2 2 0 0 0 0 4h2M1604.500 230.500h2a2 2 0 0 1 0 4h-2M1600 232.500h5" class="ic"/>

<rect x="1437.500" y="281.500" width="181" height="111.500" rx="5" class="wh"/>
<text x="1449" y="300.500" class="c" textLength="17">Text</text>
<use href="#sh2" x="1594" y="289" width="16" height="16" class="ic"/>
<rect x="1443.500" y="314.500" width="169" height="20" rx="4" fill="#fff" stroke="#ececea"/>
<text x="1449" y="327.500" class="s" textLength="18">Sora</text>
<path d="M1600.500 323.500l1.500 1.500 1.500-1.500" class="ic" style="stroke:#999"/>
<rect x="1443.500" y="340.500" width="126.500" height="20" rx="4" fill="#fff" stroke="#ececea"/>
<text x="1449" y="353.500" class="c" textLength="18">Bold</text>
<path d="M1561 349.500l1.500 1.500 1.500-1.500" class="ic" style="stroke:#999"/>
<rect x="1576" y="340" width="37" height="21" rx="4" class="f"/>
<text x="1579" y="353.500" class="g" style="font-size:9.500px;fill:#aaa" textLength="16">Size</text><text x="1597.500" y="353.500" class="s" textLength="10">60</text>
<rect x="1443" y="367" width="83" height="20" rx="5" class="f"/><rect x="1473" y="368" width="23.500" height="18" rx="3" fill="#fff" stroke="#eee"/>
<rect x="1531" y="367" width="82" height="20" rx="5" class="f"/><rect x="1560" y="368" width="24" height="18" rx="3" fill="#fff" stroke="#eee"/>
<path d="M1453 373h8M1453 377h5M1453 381h7M1480 373h8M1481.500 377h5M1480.500 381h7M1508 373h8M1511 377h5M1509 381h7" class="ic" style="stroke:#999"/>
<path d="M1541 372h8M1545 382v-7M1542.500 377l2.500-2.500 2.500 2.500" class="ic" style="stroke:#666"/>
<path d="M1567.500 377h9M1572 372v4M1572 378v4" class="ic" style="stroke:#555"/>
<path d="M1595 382h8M1599 372v7M1596.500 377l2.500 2.500 2.500-2.500" class="ic" style="stroke:#666"/>

<rect x="1437.500" y="399.500" width="181" height="58.500" rx="5" class="wh"/>
<text x="1449" y="417.500" class="c" textLength="19">Style</text>
<text x="1449" y="444.500" class="s" textLength="29">Custom</text>
<use href="#sh2" x="1541" y="433" width="16" height="16" class="ic"/>
<circle cx="1575.500" cy="441.500" r="5.200" fill="#f1c232"/>
<circle cx="1602" cy="441.500" r="4.800" fill="#eee"/>

<rect x="1437.500" y="464.500" width="181" height="31.500" rx="5" class="wh"/>
<text x="1449" y="482.500" class="c" style="fill:#aaa" textLength="52">Visual effects</text>
<path d="M1598 480h8M1602 476v8" stroke="#bbb" fill="none"/>
<rect x="1437.500" y="502.500" width="181" height="32.500" rx="5" class="wh"/>
<text x="1449" y="521.500" class="c" style="fill:#aaa" textLength="39">Animation</text>
<path d="M1598 518.500h8M1602 514.500v8" stroke="#bbb" fill="none"/>
<rect x="1437.500" y="541.500" width="181" height="20.500" rx="5" class="wh"/>
<path d="M1486 546h6M1489 545v2M1491 547q-1 4-5 6M1487 549q2 3 4 4M1491 557l2.500-6 2.500 6M1492 555h3" class="ic"/>
<text x="1502" y="554.500" class="s" textLength="68">Translate captions</text>

<use href="#fo" x="1640" y="13" width="16" height="16" class="ic"/><text x="1648" y="38.500" class="m s" textLength="25">Project</text>
<path d="M1631 56.500h34M1631 158.500h34" class="dv"/>
<use href="#sp" x="1640" y="69" width="16" height="16" class="ic"/><text x="1648" y="94" class="m s" textLength="27">AI Tools</text>
<rect x="1624" y="108" width="48" height="43" rx="5" fill="#f0efee"/>
<use href="#sl" x="1640" y="115" width="16" height="16" class="ia"/><text x="1648" y="139.500" class="m b" style="font-size:9.500px;fill:#555" textLength="36">Properties</text>
<use href="#el" x="1640" y="170" width="16" height="16" class="ic"/><text x="1648" y="195.500" class="m s" textLength="31">Elements</text>
<use href="#ca" x="1640" y="216" width="16" height="16" class="ic"/><text x="1648" y="240.500" class="m s" textLength="30">Captions</text>
<use href="#me" x="1640" y="260" width="16" height="16" class="ic"/><text x="1648" y="285.500" class="m s" textLength="21">Media</text>
<use href="#ro" x="1640" y="626" width="16" height="16" class="ic"/><text x="1648" y="651" class="m s" textLength="33">Underlord</text>
<path d="M1432 667.500h243" stroke="#e6e6e6"/>

<!-- panel 3 -->
<rect x="1679.500" y="0" width="237.500" height="666" fill="#faf8f6"/>
<use href="#ca" x="1683" y="6.500" width="16" height="16" class="ic"/>
<text x="1708" y="18" class="h" textLength="40">Captions</text>
<text x="1682" y="44.500" class="c" style="fill:#666" textLength="32">Apply to</text>
<rect x="1732" y="30" width="121" height="21" rx="5" fill="#f0eeec"/><rect x="1735" y="32" width="55" height="17" rx="3.500" fill="#fff"/>
<text x="1743" y="44" class="s" textLength="38">All scenes</text>
<text x="1802" y="44" class="g" style="font-size:9.500px" textLength="40">This scene</text>
<path d="M1679.500 60H1854a4 4 0 0 1 4 4V666H1679.500z" fill="#fff" stroke="#f0f0ee"/>
<rect x="1859" y="0" width="3" height="397" fill="#e8e8e8"/>

<rect x="1682" y="65" width="170" height="58" rx="4" fill="#f2f2f1"/>
<g fill="#333">
<rect x="1686" y="71" width="163.500" height="32" rx="1.500"/>
<rect x="1686" y="132" width="163" height="31" rx="1.500"/>
<rect x="1686" y="193" width="163" height="31" rx="1.500"/>
<rect x="1686" y="255" width="163" height="30" rx="1.500"/>
<rect x="1686" y="315" width="163" height="31" rx="1.500"/>
<rect x="1686" y="376" width="163" height="31" rx="1.500"/>
<rect x="1686" y="437" width="163" height="31" rx="1.500"/>
<rect x="1686" y="498" width="163" height="31" rx="1.500"/>
<rect x="1686" y="559" width="163" height="31" rx="1.500"/>
<rect x="1686" y="620" width="163" height="31" rx="1.500"/>
</g>
<text x="1732.500" y="91" class="m cap" style="font-size:7.500px">This</text>
<text x="1767" y="114" class="l" style="fill:#999">Typewriter</text>
<rect x="1721" y="144" width="27" height="9" fill="#0a96e8"/>
<text x="1692" y="151.500" style="font-size:8.300px;fill:#eee" textLength="28">This is a</text>
<text x="1723" y="151.500" style="font-size:8.300px;fill:#fff" textLength="23">classic</text>
<text x="1749" y="151.500" style="font-size:8.300px;fill:#eee" textLength="94">karaoke highlighted caption</text>
<text x="1767" y="175" class="l">Karaoke classic</text>
<text x="1724" y="214" class="cap" style="font-size:10px;font-style:italic" textLength="34">This is a</text>
<text x="1761" y="214" class="cap" style="font-size:10px;font-style:italic;fill:#7fe04a" textLength="30">caption</text>
<text x="1793" y="214" class="cap" style="font-size:10px;font-style:italic" textLength="18">with</text>
<text x="1767" y="236" class="l">Bold Italic: Green</text>
<text x="1721" y="274" class="cap" style="font-size:8.500px" textLength="25">THIS IS A</text>
<text x="1747" y="274" class="cap" style="font-size:8.500px;fill:#f1c232" textLength="23">CAPTION</text>
<text x="1772" y="274" class="cap" style="font-size:8.500px" textLength="42">WITH ALL-CAPS</text>
<text x="1767" y="296" class="l">Impact: Yellow</text>
<text x="1718" y="335" class="cap" style="font-size:10px;fill:#e8c04a" textLength="98">This is a caption with</text>
<path d="M1700 344h135" stroke="#666" stroke-dasharray="1 1"/>
<text x="1767" y="358" class="l">Modern yellow waveform</text>
<text x="1767" y="390.500" class="m" style="font-size:8.300px;fill:#ddd" textLength="119">This is a clean caption with white</text>
<text x="1767" y="399.500" class="m" style="font-size:8.300px;fill:#ddd" textLength="116">text and no border that takes up</text>
<text x="1767" y="419" class="l">Classic</text>
<text x="1767" y="451" class="m b" style="font-size:11px;fill:#f2f2f2">TWO</text>
<text x="1767" y="463.500" class="m b" style="font-size:11px;fill:#f2f2f2">WORD</text>
<text x="1767" y="480" class="l">Bold: Two words</text>
<text x="1719" y="511.500" class="b" style="font-size:9px;fill:#f2f2f2" textLength="39">THIS IS A</text>
<text x="1760" y="511.500" class="b" style="font-size:9px;fill:#f1c232" textLength="29">LARGE</text>
<text x="1791" y="511.500" class="b" style="font-size:9px;fill:#f2f2f2" textLength="24">BOLD</text>
<text x="1767" y="522.500" class="m b" style="font-size:9px;fill:#f2f2f2" textLength="101">WHITE CAPTION STYLE</text>
<text x="1767" y="540" class="l">Bold: Yellow highlight</text>
<text x="1723" y="574" style="font-size:8.300px;fill:#ddd" textLength="49">This is a clean</text>
<text x="1767" y="601" class="l">Clean: Paragraph</text>
<rect x="1721" y="631" width="27" height="10" fill="#0a96e8"/>
<text x="1692" y="639.500" style="font-size:8.300px;fill:#eee" textLength="28">This is a</text>
<text x="1723" y="639.500" style="font-size:8.300px;fill:#fff" textLength="23">classic</text>
<text x="1749" y="639.500" style="font-size:8.300px;fill:#777" textLength="94">karaoke highlighted caption</text>
<text x="1767" y="662" class="l">Karaoke: Preview</text>

<use href="#fo" x="1879" y="10" width="16" height="16" class="ic"/><text x="1887" y="35" class="m s" textLength="25">Project</text>
<path d="M1870 53.500h34M1870 155.500h34" class="dv"/>
<use href="#sp" x="1879" y="66" width="16" height="16" class="ic"/><text x="1887" y="91" class="m s" textLength="27">AI Tools</text>
<use href="#sl" x="1879" y="112" width="16" height="16" class="ic"/><text x="1887" y="137" class="m s" textLength="36">Properties</text>
<use href="#el" x="1879" y="168" width="16" height="16" class="ic"/><text x="1887" y="193" class="m s" textLength="32">Elements</text>
<rect x="1863" y="207" width="48" height="42" rx="5" fill="#f0efee"/>
<use href="#ca" x="1879" y="213" width="16" height="16" class="ia"/><rect x="1882" y="216.500" width="10" height="8" fill="#222"/>
<text x="1887" y="238.500" class="m b" style="font-size:9.500px;fill:#555" textLength="31">Captions</text>
<use href="#me" x="1879" y="257" width="16" height="16" class="ic"/><text x="1887" y="282.500" class="m s" textLength="21">Media</text>
<use href="#ro" x="1879" y="624" width="16" height="16" class="ic"/><text x="1887" y="649" class="m s" textLength="34">Underlord</text>
<path d="M1679 665.500h232a6 6 0 0 0 6-6V0" fill="none" stroke="#e6e6e6"/>
</svg>
<script>document.querySelectorAll('text[textLength]').forEach(function(e){e.setAttribute('lengthAdjust','spacingAndGlyphs')});</script>
</body></html>
